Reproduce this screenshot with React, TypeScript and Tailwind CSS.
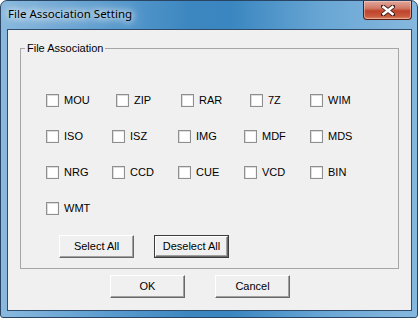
import React from 'react';

const rows: { label: string; w: number }[][] = [
  [
    { label: 'MOU', w: 70 },
    { label: 'ZIP', w: 65 },
    { label: 'RAR', w: 69 },
    { label: '7Z', w: 60 },
    { label: 'WIM', w: 60 },
  ],
  [
    { label: 'ISO', w: 66 },
    { label: 'ISZ', w: 66 },
    { label: 'IMG', w: 66 },
    { label: 'MDF', w: 66 },
    { label: 'MDS', w: 60 },
  ],
  [
    { label: 'NRG', w: 66 },
    { label: 'CCD', w: 66 },
    { label: 'CUE', w: 66 },
    { label: 'VCD', w: 66 },
    { label: 'BIN', w: 60 },
  ],
  [{ label: 'WMT', w: 66 }],
];

const CheckItem: React.FC<{ label: string; w: number }> = ({ label, w }) => (
  <label className="flex items-center h-[13px] shrink-0" style={{ width: w }}>
    <span className="w-[13px] h-[13px] border border-[#8e8f8f] bg-white shadow-[inset_1px_1px_0_#dcdcdc,inset_-1px_-1px_0_#f4f4f4] shrink-0" />
    <span className="ml-[5px] leading-[13px] text-black">{label}</span>
  </label>
);

const Button: React.FC<{ label: string; isDefault?: boolean }> = ({ label, isDefault }) => (
  <button
    className={`w-[75px] h-[23px] flex items-center justify-center bg-[#f0f0f0] text-black ${
      isDefault ? 'border border-[#3c3c3c]' : ''
    }`}
  >
    <span className="w-full h-full flex items-center justify-center border-t border-l border-white border-b border-r border-b-[#696969] border-r-[#696969] shadow-[inset_-1px_-1px_0_#a0a0a0]">
      {label}
    </span>
  </button>
);

export default function App() {
  return (
    <div className="w-[418px] h-[318px] bg-white">
      <div className="w-[418px] h-[318px] border border-[#2a4563] rounded-t-[7px] rounded-b-[3px] bg-[linear-gradient(to_right,#8ab9de_0%,#5c9dcf_25%,#3d87c0_45%,#3a86c0_55%,#6aa7d5_78%,#86b8de_100%)] relative flex flex-col">
        <div className="h-[28px] flex items-center pl-[7px] pb-[2px]">
          <span className="font-['Noto_Sans',sans-serif] text-[11.5px] text-black [text-shadow:0_0_6px_#ffffff,0_0_10px_#ffffff,0_0_16px_#eaf3fb]">
            File Association Setting
          </span>
        </div>

        <div className="absolute top-0 right-[5px] w-[49px] h-[19px] rounded-b-[4px] border border-t-0 border-[#5a1b12] bg-[linear-gradient(to_bottom,#e0a89c_0%,#d27a68_40%,#c0432c_55%,#c95a3f_85%,#d98a66_100%)] flex items-center justify-center shadow-[inset_0_0_0_1px_rgba(255,220,210,0.45)]">
          <svg width="14" height="11" viewBox="0 0 14 11">
            <path d="M2 1.5 L12 9.5 M12 1.5 L2 9.5" stroke="#3b1a14" strokeWidth="4.2" strokeLinecap="square" />
            <path d="M2.5 2 L11.5 9 M11.5 2 L2.5 9" stroke="#ffffff" strokeWidth="2.6" strokeLinecap="square" />
          </svg>
        </div>

        <div className="ml-[6px] mr-[5px] h-[282px] border border-[#2f4c6c] bg-[#f0f0f0] font-['Liberation_Sans',sans-serif] text-[11px]">
          <div className="pt-[18px] pl-[12px]">
            <div className="relative w-[379px] h-[221px] border border-[#a6a6a6]">
              <span className="absolute -top-[8px] left-[4px] px-[2px] bg-[#f0f0f0] leading-[14px] text-black">
                File Association
              </span>
              <div className="pt-[45px] pl-[25px] flex flex-col gap-[23px]">
                {rows.map((r, i) => (
                  <div key={i} className="flex">
                    {r.map(it => (
                      <CheckItem key={it.label} label={it.label} w={it.w} />
                    ))}
                  </div>
                ))}
              </div>
              <div className="flex gap-[20px] ml-[38px] mt-[20px]">
                <Button label="Select All" />
                <Button label="Deselect All" isDefault />
              </div>
            </div>
          </div>
          <div className="flex gap-[30px] ml-[102px] mt-[6px]">
            <Button label="OK" />
            <Button label="Cancel" />
          </div>
        </div>
      </div>
    </div>
  );
}
